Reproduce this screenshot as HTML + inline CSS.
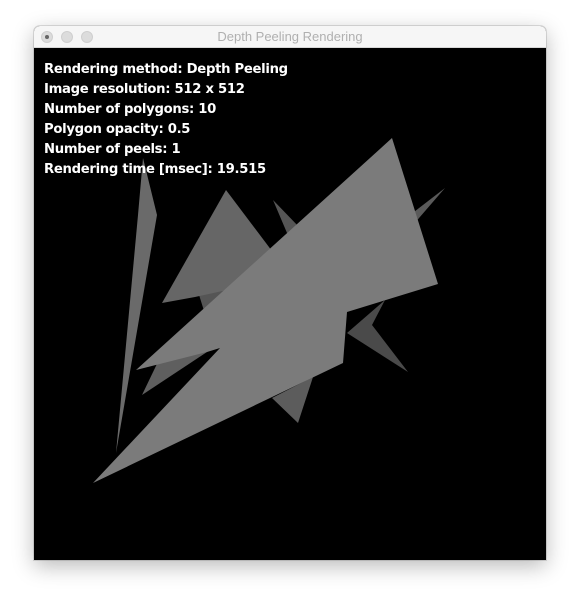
<!DOCTYPE html>
<html><head><style>
html,body{margin:0;padding:0;background:#fff;width:580px;height:602px;overflow:hidden}
.win{position:absolute;left:34px;top:26px;width:512px;height:534px;border-radius:6px 6px 0 0;box-shadow:0 6px 22px rgba(0,0,0,0.28),0 0 0 1px rgba(0,0,0,0.12);background:#000;overflow:hidden}
.tb{position:absolute;left:0;top:0;width:512px;height:22px;background:#f6f6f6;border-bottom:1px solid #d8d8d8;box-sizing:border-box}
.tb .t{position:absolute;left:0;width:512px;top:3px;text-align:center;font:13px "Liberation Sans",sans-serif;color:#b0b0b0}
.dot{position:absolute;top:5px;width:12px;height:12px;border-radius:50%;background:#dcdcdc;border:1px solid #cfcfcf;box-sizing:border-box}
.txt{position:absolute;font:bold 13.2px/20px "DejaVu Sans","Liberation Sans",sans-serif;color:#fff;letter-spacing:-0.3px}
svg{position:absolute;left:0;top:0}
</style></head><body>
<div class="win">
<div class="tb"><div class="dot" style="left:7px"></div><div style="position:absolute;left:11px;top:9px;width:4px;height:4px;border-radius:50%;background:#666"></div><div class="dot" style="left:27px"></div><div class="dot" style="left:47px"></div><div class="t">Depth Peeling Rendering</div></div>
</div>
<svg width="580" height="602">
<polygon points="273,200 300,228 290,240" fill="#555"/>
<polygon points="445,188 410,215 420,240 400,240" fill="#5a5a5a"/>
<polygon points="408,372 372,325 385,300 347,333" fill="#4a4a4a"/>
<polygon points="195,282 300,262 330,300 210,330" fill="#555"/>
<polygon points="298,423 272,398 313,377" fill="#5c5c5c"/>
<polygon points="142,395 167,343 210,350" fill="#5f5f5f"/>
<polygon points="226,190 162,303 195,297 250,285 275,255" fill="#666"/>
<polygon points="143,158 157,215 116,453 138,215" fill="#6a6a6a"/>
<polygon points="392,138 438,284 347,312 343,363 270,398 93,483 220,348 207,352 136,370" fill="#7b7b7b"/>
</svg>
<div class="txt" style="left:44px;top:60px">Rendering method: Depth Peeling<br>Image resolution: 512 x 512<br>Number of polygons: 10<br>Polygon opacity: 0.5<br>Number of peels: 1<br>Rendering time [msec]: 19.515</div>
</body></html>
